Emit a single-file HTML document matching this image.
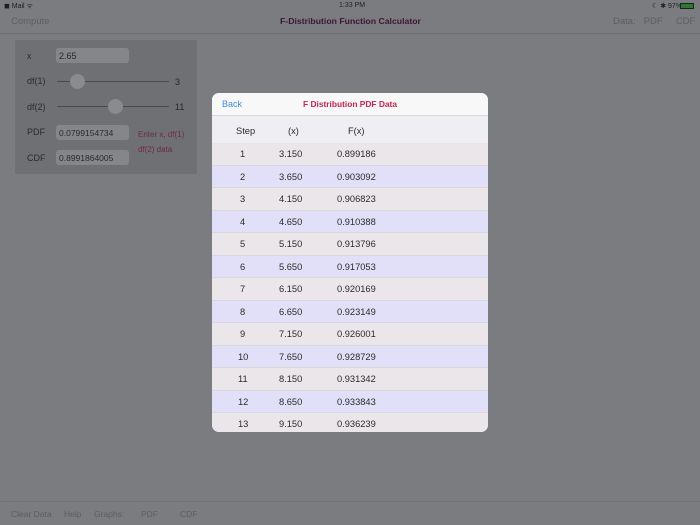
<!DOCTYPE html>
<html><head><style>
*{margin:0;padding:0;box-sizing:border-box}
body{width:700px;height:525px;background:#7b7c80;font-family:"Liberation Sans",sans-serif;position:relative;overflow:hidden;color:#2a2a2c}
.a{position:absolute;white-space:nowrap}
.g{color:#5d5e62}
</style></head><body>
<div class="a" style="left:4px;top:2px;font-size:7px;color:#1e1e20">◼ Mail ᯤ</div>
<div class="a" style="left:339px;top:2px;font-size:7px;color:#1e1e20">1:33 PM</div>
<div class="a" style="left:652px;top:2px;font-size:7px;color:#1e1e20">☾ ✱ 97%</div>
<div class="a" style="left:680px;top:3px;width:14px;height:6px;border:1px solid #222;background:#2a7a2a"></div>
<div class="a g" style="left:11px;top:16px;font-size:9.5px">Compute</div>
<div class="a" style="left:280px;top:16px;font-size:8.7px;color:#3e1434;font-weight:bold">F-Distribution Function Calculator</div>
<div class="a g" style="left:613px;top:16px;font-size:9.5px">Data:&nbsp;&nbsp; PDF&nbsp;&nbsp;&nbsp;&nbsp; CDF</div>
<div class="a" style="left:0;top:33px;width:700px;height:1px;background:#6e6f73"></div>
<div class="a" style="left:15px;top:40px;width:182px;height:134px;background:#6f7074"></div>
<div class="a" style="left:27px;top:51px;font-size:9px">x</div>
<div class="a" style="left:56px;top:48px;width:73px;height:15px;background:#85868a;border-radius:3px;font-size:9px;padding:3px 3px">2.65</div>
<div class="a" style="left:27px;top:76px;font-size:9px">df(1)</div>
<div class="a" style="left:57px;top:81px;width:112px;height:1px;background:#4a4b4f"></div>
<div class="a" style="left:70px;top:74px;width:15px;height:15px;border-radius:50%;background:#8a8b8f"></div>
<div class="a" style="left:175px;top:77px;font-size:9px">3</div>
<div class="a" style="left:27px;top:102px;font-size:9px">df(2)</div>
<div class="a" style="left:57px;top:106px;width:112px;height:1px;background:#4a4b4f"></div>
<div class="a" style="left:108px;top:99px;width:15px;height:15px;border-radius:50%;background:#8a8b8f"></div>
<div class="a" style="left:175px;top:102px;font-size:9px">11</div>
<div class="a" style="left:27px;top:127px;font-size:9px">PDF</div>
<div class="a" style="left:56px;top:125px;width:73px;height:15px;background:#85868a;border-radius:3px;font-size:8.5px;padding:3px 3px">0.0799154734</div>
<div class="a" style="left:138px;top:127px;font-size:8px;color:#6e2a46;line-height:15px">Enter x, df(1)<br>df(2) data</div>
<div class="a" style="left:27px;top:153px;font-size:9px">CDF</div>
<div class="a" style="left:56px;top:150px;width:73px;height:15px;background:#85868a;border-radius:3px;font-size:8.5px;padding:3px 3px">0.8991864005</div>
<div class="a" style="left:0;top:501px;width:700px;height:1px;background:#727377"></div>
<div class="a g" style="left:11px;top:509px;font-size:8.5px">Clear Data</div>
<div class="a g" style="left:64px;top:509px;font-size:8.5px">Help</div>
<div class="a g" style="left:94px;top:509px;font-size:8.5px">Graphs:</div>
<div class="a g" style="left:141px;top:509px;font-size:8.5px">PDF</div>
<div class="a g" style="left:180px;top:509px;font-size:8.5px">CDF</div>
<div class="a" style="left:212px;top:93px;width:276px;height:339px;border-radius:7px;overflow:hidden;background:#efeef3">
<div style="height:23px;background:#f8f8f8;border-bottom:1px solid #d8d8dc;position:relative">
<span class="a" style="left:10px;top:6px;font-size:9px;color:#3b8ef0">Back</span>
<span class="a" style="left:91px;top:6px;font-size:8.4px;color:#d2204f;font-weight:bold">F Distribution PDF Data</span></div>
<div style="position:relative;height:27px;font-size:9.3px">
<span class="a" style="left:24px;top:10px">Step</span><span class="a" style="left:76px;top:10px">(x)</span><span class="a" style="left:136px;top:10px">F(x)</span></div>
<div id="r"></div>
</div>
<script>
var d=[[1,"3.150","0.899186"],[2,"3.650","0.903092"],[3,"4.150","0.906823"],[4,"4.650","0.910388"],[5,"5.150","0.913796"],[6,"5.650","0.917053"],[7,"6.150","0.920169"],[8,"6.650","0.923149"],[9,"7.150","0.926001"],[10,"7.650","0.928729"],[11,"8.150","0.931342"],[12,"8.650","0.933843"],[13,"9.150","0.936239"]],h="";
d.forEach(function(r,i){h+='<div style="position:relative;height:22.5px;font-size:9.3px;border-bottom:1px solid #d9d8de;background:'+(i%2?'#e1e0f8':'#ebe6ea')+'"><span class="a" style="left:'+(r[0]>9?26:28)+'px;top:6px">'+r[0]+'</span><span class="a" style="left:67px;top:6px">'+r[1]+'</span><span class="a" style="left:125px;top:6px">'+r[2]+'</span></div>'});
document.getElementById("r").innerHTML=h;
</script>
</body></html>
